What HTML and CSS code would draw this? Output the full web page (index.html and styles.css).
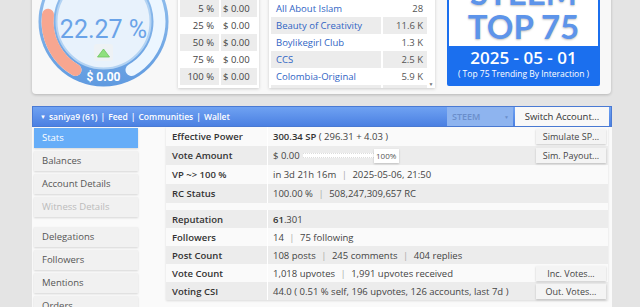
FILE: index.html
```html
<!DOCTYPE html>
<html lang="en">
<head>
    <meta charset="UTF-8">
    <title>Account Stats</title>
    <link rel="stylesheet" href="styles.css">
</head>
<body>

    <div class="top-panel">
        <div class="gauge">
            <svg width="131" height="131" viewBox="0 0 131 131">
                <defs>
                    <linearGradient id="ringGrad" x1="0" y1="0" x2="0" y2="1">
                        <stop offset="0" stop-color="#a3cbf1"/>
                        <stop offset="1" stop-color="#5f9ae0"/>
                    </linearGradient>
                </defs>
                <circle cx="65.5" cy="65.5" r="65" fill="url(#ringGrad)"/>
                <path d="M 37.5 114 A 56 56 0 1 1 93.5 114" fill="none" stroke="#ecf6ff" stroke-width="12" stroke-linecap="round"/>
                <path d="M 37.5 114 A 56 56 0 0 1 10 58.7" fill="none" stroke="#f7a690" stroke-width="12" stroke-linecap="round"/>
                <circle cx="65.5" cy="65.5" r="47" fill="#e8f2fc" stroke="#b3d3f3" stroke-width="2"/>
                <text x="65.5" y="82" text-anchor="middle" class="gauge-pct">22.27 %</text>
                <rect x="56" y="88" width="19" height="17" rx="3" fill="#eef2f5"/>
                <path d="M 59.5 101 L 65.5 93 L 71.5 101 Z" fill="#8fe07e" stroke="#6cc45c" stroke-width="0.8"/>
                <text x="65.5" y="125" text-anchor="middle" class="gauge-val">$ 0.00</text>
            </svg>
        </div>

        <div class="box mini-table">
            <table>
                <tr><td>1 %</td><td>$ 0.00</td></tr>
                <tr class="alt"><td>5 %</td><td>$ 0.00</td></tr>
                <tr><td>25 %</td><td>$ 0.00</td></tr>
                <tr class="alt"><td>50 %</td><td>$ 0.00</td></tr>
                <tr><td>75 %</td><td>$ 0.00</td></tr>
                <tr class="alt"><td>100 %</td><td>$ 0.00</td></tr>
            </table>
        </div>

        <div class="box community-box">
            <div class="community-list">
                <table>
                    <tr class="alt"><td><a href="#">Actifit</a></td><td>9.8 K</td></tr>
                    <tr><td><a href="#">All About Islam</a></td><td>28</td></tr>
                    <tr class="alt"><td><a href="#">Beauty of Creativity</a></td><td>11.6 K</td></tr>
                    <tr><td><a href="#">Boylikegirl Club</a></td><td>1.3 K</td></tr>
                    <tr class="alt"><td><a href="#">CCS</a></td><td>2.5 K</td></tr>
                    <tr><td><a href="#">Colombia-Original</a></td><td>5.9 K</td></tr>
                    <tr class="alt"><td><a href="#">Dream Builders</a></td><td>3.1 K</td></tr>
                </table>
            </div>
            <div class="scrollbar"><span class="arrow">&#9660;</span></div>
        </div>

        <div class="top75">
            <div class="top75-head">STEEM<br>TOP 75</div>
            <div class="top75-foot">
                <div class="top75-date">2025 - 05 - 01</div>
                <div class="top75-sub">( Top 75 Trending By Interaction )</div>
            </div>
        </div>
    </div>

    <div class="navbar">
        <div class="nav-links">
            <span class="caret">&#9660;</span><a href="#">saniya9 (61)</a><span class="sep">|</span><a href="#">Feed</a><span class="sep">|</span><a href="#">Communities</a><span class="sep">|</span><a href="#">Wallet</a>
        </div>
        <div class="chain-select">STEEM <span class="chain-caret">&#9660;</span></div>
        <button class="switch-btn">Switch Account...</button>
    </div>

    <div class="main">
        <div class="sidebar">
            <div class="menu-item active">Stats</div>
            <div class="menu-item">Balances</div>
            <div class="menu-item">Account Details</div>
            <div class="menu-item disabled">Witness Details</div>
            <div class="menu-item spaced">Delegations</div>
            <div class="menu-item">Followers</div>
            <div class="menu-item">Mentions</div>
            <div class="menu-item">Orders</div>
        </div>

        <table class="stats">
            <tr class="tall">
                <td class="label">Effective Power</td>
                <td class="value"><div class="cell"><span><b>300.34 SP</b> ( 296.31 + 4.03 )</span><button class="btn">Simulate SP...</button></div></td>
            </tr>
            <tr class="tall alt">
                <td class="label">Vote Amount</td>
                <td class="value"><div class="cell"><span class="vote">$ 0.00 <span class="track"></span><span class="thumb">100%</span></span><button class="btn">Sim. Payout...</button></div></td>
            </tr>
            <tr class="tall">
                <td class="label">VP ~&gt; 100 %</td>
                <td class="value">in 3d 21h 16m <span class="sep">|</span> 2025-05-06, 21:50</td>
            </tr>
            <tr class="tall alt">
                <td class="label">RC Status</td>
                <td class="value">100.00 % <span class="sep">|</span> 508,247,309,657 RC</td>
            </tr>
            <tr class="spacer"><td colspan="2"></td></tr>
            <tr class="alt">
                <td class="label">Reputation</td>
                <td class="value"><b>61</b>.301</td>
            </tr>
            <tr>
                <td class="label">Followers</td>
                <td class="value">14 <span class="sep">|</span> 75 following</td>
            </tr>
            <tr class="alt">
                <td class="label">Post Count</td>
                <td class="value">108 posts <span class="sep">|</span> 245 comments <span class="sep">|</span> 404 replies</td>
            </tr>
            <tr>
                <td class="label">Vote Count</td>
                <td class="value"><div class="cell"><span>1,018 upvotes <span class="sep">|</span> 1,991 upvotes received</span><button class="btn">Inc. Votes...</button></div></td>
            </tr>
            <tr class="alt">
                <td class="label">Voting CSI</td>
                <td class="value"><div class="cell"><span>44.0 ( 0.51 % self, 196 upvotes, 126 accounts, last 7d )</span><button class="btn">Out. Votes...</button></div></td>
            </tr>
        </table>
    </div>

</body>
</html>
```

FILE: styles.css
```css
body {
    margin: 0;
    background-color: #e4e4e4;
    font-family: "Open Sans", Arial, sans-serif;
    font-size: 9px;
    color: #444;
}
a {
    text-decoration: none;
}
table {
    border-collapse: collapse;
}

/* top panel, scrolled partly out of view */
.top-panel {
    width: 579px;
    height: 154px;
    margin: -60px 0 0 32px;
    background-color: #f8f8f8;
    border-radius: 0 0 4px 4px;
    box-shadow: 0 1px 3px rgba(0, 0, 0, 0.2);
    display: flex;
    align-items: flex-end;
    box-sizing: border-box;
    padding: 0 0 6px 6px;
}
.gauge {
    width: 131px;
    height: 131px;
    margin-bottom: 1px;
}
.gauge svg {
    display: block;
}
.gauge-pct {
    font-family: "Liberation Sans Narrow", "Roboto", sans-serif;
    font-size: 25px;
    fill: #6aa3e8;
}
.gauge-val {
    font-family: "Liberation Sans Narrow", "Roboto", sans-serif;
    font-size: 12px;
    font-weight: bold;
    fill: #fff;
}
.box {
    background-color: #fff;
    box-shadow: 0 1px 3px rgba(0, 0, 0, 0.18);
    padding: 0 2px 3px;
}
.alt td,
tr.alt {
    background-color: #ececec;
}
.mini-table {
    margin-left: 9px;
    width: 77px;
}
.mini-table table {
    width: 100%;
}
.mini-table td {
    height: 17px;
    padding: 0;
    font-size: 9.5px;
    color: #444;
}
.mini-table td:first-child {
    text-align: right;
    padding-right: 5px;
    width: 34px;
    border-right: 2px solid #fff;
}
.mini-table td:last-child {
    padding-left: 2px;
}
.community-box {
    margin-left: 10px;
    width: 164px;
    display: flex;
    padding: 0 0 0 2px;
}
.community-list {
    width: 158px;
    height: 105px;
    overflow: hidden;
    display: flex;
    flex-direction: column;
    justify-content: flex-end;
}
.community-list table {
    width: 100%;
    margin-bottom: -14px;
}
.community-list td {
    height: 17px;
    padding: 0 0 0 5px;
    font-size: 9.5px;
    white-space: nowrap;
}
.community-list td:last-child {
    text-align: right;
    padding-right: 4px;
    color: #555;
    border-left: 2px solid #fff;
}
.community-list a {
    color: #2f64c4;
}
.scrollbar {
    width: 8px;
    display: flex;
    flex-direction: column;
    justify-content: flex-end;
    align-items: center;
}
.scrollbar .arrow {
    font-size: 5px;
    color: #777;
    margin-bottom: 1px;
}
.top75 {
    margin-left: 12px;
    margin-bottom: 2px;
    width: 153px;
    border: 2px solid #1b6fee;
    border-radius: 2px;
    background-color: #1b6fee;
    box-sizing: border-box;
}
.top75-head {
    background-color: #fff;
    text-align: center;
    font-family: "Lato", "Open Sans", sans-serif;
    font-weight: bold;
    font-size: 33px;
    line-height: 34px;
    color: #5d94ea;
    text-shadow: 0 1px 2px rgba(0, 0, 0, 0.25);
    padding-bottom: 3px;
}
.top75-foot {
    height: 38px;
    box-sizing: border-box;
    color: #fff;
    text-align: center;
    padding-top: 2px;
}
.top75-date {
    font-size: 17px;
    font-weight: 600;
    line-height: 20px;
}
.top75-sub {
    font-size: 8.5px;
    line-height: 12px;
}

/* account bar */
.navbar {
    width: 580px;
    height: 21px;
    margin: 12px 0 0 32px;
    background: linear-gradient(#6fa2f2, #4b80e2);
    border: 1px solid #4a7ad4;
    box-sizing: border-box;
    display: flex;
    align-items: center;
}
.nav-links {
    flex: 1;
    padding-left: 7px;
    color: #fff;
    font-size: 8.5px;
    font-weight: 600;
    display: flex;
    align-items: center;
}
.nav-links a {
    color: #fff;
}
.nav-links .caret {
    font-size: 6px;
    margin-right: 3px;
}
.nav-links .sep {
    margin: 0 3px;
}
.chain-select {
    width: 66px;
    height: 19px;
    box-sizing: border-box;
    background-color: #8eb4ef;
    color: #6a8ecb;
    font-size: 9px;
    font-weight: 600;
    padding: 0 4px 0 5px;
    display: flex;
    align-items: center;
    justify-content: space-between;
}
.chain-caret {
    font-size: 5px;
}
.switch-btn {
    width: 94px;
    height: 19px;
    margin: 0 2px 0 2px;
    border: none;
    background-color: #f8f8f8;
    font-family: "Open Sans", Arial, sans-serif;
    font-size: 9.5px;
    color: #333;
    padding: 0;
}

/* main area */
.main {
    width: 580px;
    margin-left: 32px;
    background-color: #fafafa;
    display: flex;
    align-items: flex-start;
    padding-bottom: 20px;
}
.sidebar {
    width: 104px;
    margin: 1px 0 0 2px;
}
.menu-item {
    height: 20px;
    line-height: 20px;
    margin-bottom: 3px;
    padding-left: 8px;
    background-color: #f1f1f1;
    box-shadow: 0 1px 2px rgba(0, 0, 0, 0.15);
    color: #555;
    font-size: 9.5px;
}
.menu-item.active {
    background-color: #66adf8;
    color: #fff;
}
.menu-item.disabled {
    color: #bbb;
}
.menu-item.spaced {
    margin-top: 10px;
}
.stats {
    width: 442px;
    margin-left: 28px;
    box-shadow: 0 1px 2px rgba(0, 0, 0, 0.12);
}
.stats td {
    height: 18px;
    padding: 0;
    white-space: nowrap;
}
.stats tr.tall td {
    height: 19px;
}
.stats tr.spacer td {
    height: 7px;
}
.stats .label {
    width: 95px;
    padding-left: 6px;
    font-weight: 600;
    color: #333;
    font-size: 9.5px;
    border-right: 1px solid #fff;
}
.stats .value {
    padding-left: 5px;
    font-size: 9.5px;
    color: #444;
}
.stats .value b {
    font-weight: 600;
    color: #333;
}
.stats .sep {
    color: #aaa;
    margin: 0 3px;
}
.cell {
    display: flex;
    align-items: center;
    justify-content: space-between;
}
.btn {
    width: 70px;
    height: 15px;
    margin-right: 2px;
    border: none;
    background-color: #f4f4f4;
    box-shadow: 0 1px 2px rgba(0, 0, 0, 0.2);
    font-family: "Open Sans", Arial, sans-serif;
    font-size: 9px;
    color: #444;
    padding: 0;
}
.vote {
    display: flex;
    align-items: center;
}
.track {
    width: 71px;
    height: 3px;
    margin-left: 3px;
    border-top: 1px dotted #ddd;
    border-bottom: 1px dotted #ddd;
    background-color: #fff;
}
.thumb {
    width: 25px;
    height: 14px;
    line-height: 14px;
    text-align: center;
    background-color: #fff;
    box-shadow: 0 1px 2px rgba(0, 0, 0, 0.2);
    font-size: 8px;
    color: #555;
}
```
